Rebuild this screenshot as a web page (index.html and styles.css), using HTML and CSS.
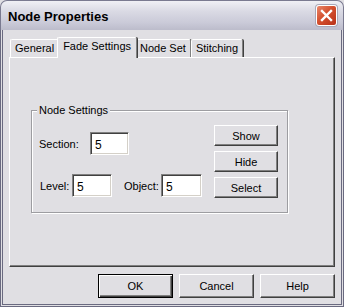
FILE: index.html
```html
<!DOCTYPE html>
<html lang="en">
<head>
    <meta charset="UTF-8">
    <title>Node Properties</title>
    <link rel="stylesheet" href="styles.css">
</head>
<body>
<div class="window">
    <div class="titlebar">
        <span class="title">Node Properties</span>
        <span class="close">
            <svg width="19" height="19" viewBox="0 0 19 19">
                <path d="M5 5 L14 14 M14 5 L5 14" stroke="#fff" stroke-width="2.4" stroke-linecap="square"/>
            </svg>
        </span>
    </div>
    <div class="frame">
        <ul class="tabs">
            <li>General</li>
            <li class="select">Fade Settings</li>
            <li>Node Set</li>
            <li>Stitching</li>
        </ul>
        <div class="panel">
            <div class="group">
                <span class="group-title">Node Settings</span>
                <div class="fields">
                    <div class="row">
                        <label class="lbl-section">Section:</label>
                        <input class="field field-section" value="5">
                    </div>
                    <div class="row row-level">
                        <label class="lbl-level">Level:</label>
                        <input class="field field-level" value="5">
                        <label class="lbl-object">Object:</label>
                        <input class="field field-object" value="5">
                    </div>
                </div>
                <div class="side-buttons">
                    <button class="btn btn-side">Show</button>
                    <button class="btn btn-side">Hide</button>
                    <button class="btn btn-side">Select</button>
                </div>
            </div>
        </div>
        <div class="footer">
            <button class="btn btn-footer default">OK</button>
            <button class="btn btn-footer">Cancel</button>
            <button class="btn btn-footer">Help</button>
        </div>
    </div>
</div>
</body>
</html>
```

FILE: styles.css
```css
* {
    margin: 0;
    padding: 0;
    box-sizing: border-box;
    font-family: "Liberation Sans", Arial, sans-serif;
    font-size: 11px;
}

body {
    background: #fff;
}

ul li {
    list-style: none;
}

.window {
    width: 344px;
    height: 307px;
    background: #e0dfe3;
}

/* title bar */
.titlebar {
    height: 30px;
    display: flex;
    align-items: center;
    justify-content: space-between;
    padding: 0 6px 0 7px;
    border-radius: 7px 7px 0 0;
    border: 1px solid #7a7a90;
    border-bottom: 0;
    background: linear-gradient(#f0f0f5, #dadae4 35%, #cacad8 75%, #bcbccb);
}

.title {
    font-size: 13px;
    font-weight: bold;
    color: #000;
    margin-top: 1px;
}

.close {
    width: 21px;
    height: 21px;
    display: flex;
    border: 1px solid #fff;
    border-radius: 3px;
    background: linear-gradient(135deg, #e8866a, #d4502e 45%, #b83018);
    box-shadow: 0 0 0 1px #a8a8b8;
}

/* window body */
.frame {
    height: 277px;
    border: 3px double #6a6a80;
    border-top: 0;
    padding-top: 7px;
}

.tabs {
    display: flex;
    align-items: flex-end;
    height: 20px;
    padding-left: 7px;
}

.tabs li {
    height: 18px;
    line-height: 17px;
    padding: 0 4px;
    border: 1px solid #fff;
    border-bottom: 0;
    border-right-color: #808080;
    border-radius: 2px 2px 0 0;
    box-shadow: 1px 0 0 #404040;
    color: #000;
    background: #e0dfe3;
}

.tabs li.select {
    position: relative;
    z-index: 1;
    height: 21px;
    line-height: 16px;
    margin: 0 -2px -1px;
    padding: 0 5px;
}

.panel {
    width: 326px;
    height: 210px;
    margin-left: 6px;
    padding: 52px 0 0 21px;
    border: 1px solid #fff;
    border-right-color: #404040;
    border-bottom-color: #404040;
    box-shadow: inset -1px -1px 0 #808080;
}

/* group box */
.group {
    position: relative;
    display: flex;
    width: 257px;
    height: 103px;
    border: 1px solid #9d9da1;
    box-shadow: inset 1px 1px 0 #fff, 1px 1px 0 #fff;
}

.group-title {
    position: absolute;
    top: -7px;
    left: 5px;
    padding: 0 2px;
    background: #e0dfe3;
    line-height: 13px;
}

.fields {
    padding: 21px 0 0 7px;
}

.row {
    display: flex;
    align-items: center;
    height: 23px;
}

.row-level {
    margin-top: 19px;
}

.lbl-section {
    width: 51px;
}

.lbl-level {
    width: 32px;
    margin-left: 1px;
}

.lbl-object {
    width: 37px;
    margin-left: 12px;
}

.field {
    height: 23px;
    width: 40px;
    padding: 2px 0 0 4px;
    font-size: 12px;
    color: #000;
    background: #fff;
    border: 1px solid;
    border-color: #808080 #fff #fff #808080;
    box-shadow: inset 1px 1px 0 #404040, inset -1px -1px 0 #d4d0c8;
    outline: none;
}

.field-section {
    width: 39px;
}

.field-object {
    width: 41px;
}

.side-buttons {
    display: flex;
    flex-direction: column;
    gap: 5px;
    margin: 0 9px 0 auto;
    padding-top: 14px;
}

/* buttons */
.btn {
    color: #000;
    background: #e0dfe3;
    border: 1px solid;
    border-color: #fff #404040 #404040 #fff;
    box-shadow: inset -1px -1px 0 #808080;
    text-align: center;
    font-size: 11px;
}

.btn-side {
    width: 64px;
    height: 21px;
}

.footer {
    display: flex;
    justify-content: flex-end;
    gap: 6px;
    margin-top: 7px;
    padding-right: 6px;
}

.btn-footer {
    width: 75px;
    height: 24px;
}

.btn.default {
    border: 1px solid #000;
    box-shadow: inset 1px 1px 0 #fff, inset -1px -1px 0 #404040, inset -2px -2px 0 #808080;
}
```
